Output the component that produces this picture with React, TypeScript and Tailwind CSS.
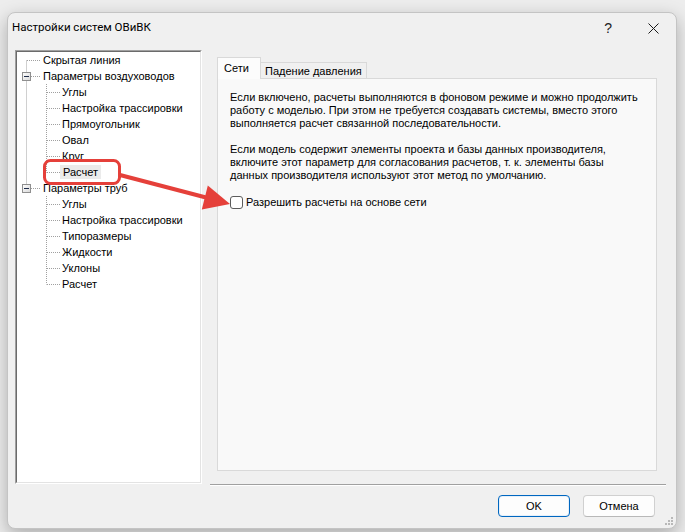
import React from "react";

type Node = { label: string; level: 0 | 1; box?: boolean; selected?: boolean };

const tree: Node[] = [
  { label: "Скрытая линия", level: 0 },
  { label: "Параметры воздуховодов", level: 0, box: true },
  { label: "Углы", level: 1 },
  { label: "Настройка трассировки", level: 1 },
  { label: "Прямоугольник", level: 1 },
  { label: "Овал", level: 1 },
  { label: "Круг", level: 1 },
  { label: "Расчет", level: 1, selected: true },
  { label: "Параметры труб", level: 0, box: true },
  { label: "Углы", level: 1 },
  { label: "Настройка трассировки", level: 1 },
  { label: "Типоразмеры", level: 1 },
  { label: "Жидкости", level: 1 },
  { label: "Уклоны", level: 1 },
  { label: "Расчет", level: 1 },
];

function TreeLines() {
  const cy = (i: number) => 8.5 + 16 * i;
  const dot = { stroke: "#a0a0a0", strokeWidth: 1, strokeDasharray: "1 1" };
  return (
    <svg className="absolute left-0 top-0" width="184" height="260">
      <line x1="9.5" y1={cy(0)} x2="9.5" y2={cy(8)} {...dot} />
      {[0, 1, 8].map((i) => (
        <line key={"h" + i} x1="10" y1={cy(i)} x2="24" y2={cy(i)} {...dot} />
      ))}
      <line x1="29.5" y1="32" x2="29.5" y2={cy(7)} {...dot} />
      <line x1="29.5" y1="144" x2="29.5" y2={cy(14)} {...dot} />
      {[2, 3, 4, 5, 6, 7, 9, 10, 11, 12, 13, 14].map((i) => (
        <line key={"c" + i} x1="30" y1={cy(i)} x2="44" y2={cy(i)} {...dot} />
      ))}
      {[1, 8].map((i) => (
        <g key={"b" + i}>
          <defs>
            <linearGradient id={"g" + i} x1="0" y1="0" x2="1" y2="1">
              <stop offset="0" stopColor="#ffffff" />
              <stop offset="1" stopColor="#d8d8d8" />
            </linearGradient>
          </defs>
          <rect x="5.5" y={cy(i) - 4} width="8" height="8" fill={`url(#g${i})`} stroke="#8f8f8f" />
          <line x1="7" y1={cy(i)} x2="12" y2={cy(i)} stroke="#1f2c4a" strokeWidth="1" />
        </g>
      ))}
    </svg>
  );
}

export default function App() {
  return (
    <div className="relative w-[685px] h-[532px] overflow-hidden bg-[#ededed] pl-[7px] pt-[12px] font-['Liberation_Sans',Arial,sans-serif] text-black">
      <div className="w-[670px] h-[517px] rounded-[8px] border border-[#c4c4c4] bg-[#f0f0f0] shadow-[0_6px_18px_rgba(0,0,0,0.28)] flex flex-col">
        {/* title bar */}
        <div className="h-[32px] flex items-center pl-[4px] pr-[17px] pt-[2px]">
          <div className="font-['Roboto',sans-serif] text-[11.5px] leading-none">Настройки систем ОВиВК</div>
          <div className="ml-auto flex items-center">
            <span className="font-['Liberation_Sans',sans-serif] text-[14px] leading-none text-[#222] mr-[36px]">?</span>
            <svg width="11" height="11" viewBox="0 0 11 11">
              <path d="M0.5 0.5 L10.5 10.5 M10.5 0.5 L0.5 10.5" stroke="#1a1a1a" strokeWidth="1" />
            </svg>
          </div>
        </div>

        {/* body */}
        <div className="flex pl-[7px] pt-[9px]">
          {/* tree */}
          <div className="w-[187px] h-[434px] border-t border-l border-[#a0a0a0] border-r-white border-b-white border-r border-b">
            <div className="w-full h-full border-t border-l border-[#6b6b6b] border-r border-b border-r-[#e3e3e3] border-b-[#e3e3e3] bg-white relative">
              <TreeLines />
              <div className="relative flex flex-col">
                {tree.map((n, i) => (
                  <div
                    key={i}
                    className={n.level === 0 ? "h-4 flex items-center pl-[24px]" : "h-4 flex items-center pl-[43px]"}
                  >
                    <span
                      className={
                        n.selected
                          ? "px-[3px] h-[14px] leading-[14px] text-[11px] bg-[#ebebeb]"
                          : "px-[2px] h-[14px] leading-[14px] text-[11px]"
                      }
                    >
                      {n.label}
                    </span>
                  </div>
                ))}
              </div>
            </div>
          </div>

          {/* right column */}
          <div className="ml-[8px] w-[456px] flex flex-col">
            <div className="pt-[7px] pl-[7px] pr-[9px]">
              <div className="flex items-end h-[21px]">
                <div className="relative z-10 h-[22px] -mb-px w-[44px] border border-b-0 border-[#d9d9d9] bg-[#fcfcfc] pl-[6px] text-[11px] leading-[20px]">
                  Сети
                </div>
                <div className="h-[16px] border border-l-0 border-b-0 border-[#d9d9d9] bg-[#f0f0f0] px-[4px] text-[11px] leading-[16px]">
                  Падение давления
                </div>
              </div>
              <div className="h-[393px] border border-[#d9d9d9] bg-[#f9f9f9] pl-[12px] pt-[12px] text-[11px] leading-[13px]">
                <div className="whitespace-nowrap">Если включено, расчеты выполняются в фоновом режиме и можно продолжить</div>
                <div className="whitespace-nowrap">работу с моделью. При этом не требуется создавать системы, вместо этого</div>
                <div className="whitespace-nowrap">выполняется расчет связанной последовательности.</div>
                <div className="mt-[13px] whitespace-nowrap">Если модель содержит элементы проекта и базы данных производителя,</div>
                <div className="whitespace-nowrap">включите этот параметр для согласования расчетов, т. к. элементы базы</div>
                <div className="whitespace-nowrap">данных производителя используют этот метод по умолчанию.</div>
                <div className="mt-[14px] flex items-center h-[13px]">
                  <div className="w-[13px] h-[13px] rounded-[3px] border border-[#5c5c5c] bg-white" />
                  <span className="ml-[3px] whitespace-nowrap">Разрешить расчеты на основе сети</span>
                </div>
              </div>
            </div>
            <div className="mt-[13px] h-[2px] border-t border-[#a0a0a0] border-b border-b-white" />
          </div>
        </div>

        {/* buttons */}
        <div className="mt-[9px] flex justify-end gap-[13px] pr-[21px]">
          <button className="w-[72px] h-[22px] rounded-[4px] border border-[#0067c0] bg-[#fdfdfd] text-[11px] leading-none shadow-[inset_0_0_0_1px_#e6f0fa]">
            OK
          </button>
          <button className="w-[72px] h-[22px] rounded-[4px] border border-[#d0d0d0] border-b-[#b8b8b8] bg-[#fdfdfd] text-[11px] leading-none">
            Отмена
          </button>
        </div>
        <div className="mt-auto flex justify-end pr-[3px] pb-[3px]">
          <svg width="8" height="8" viewBox="0 0 8 8">
            {[
              [6, 0],
              [6, 3],
              [3, 3],
              [6, 6],
              [3, 6],
              [0, 6],
            ].map(([x, y], k) => (
              <rect key={k} x={x} y={y} width="2" height="2" fill="#b8b8b8" />
            ))}
          </svg>
        </div>
      </div>

      {/* annotation overlay */}
      <svg className="absolute left-0 top-0 pointer-events-none" width="685" height="532">
        <rect x="44.5" y="160.5" width="75" height="23" rx="6" fill="none" stroke="#e5403a" strokeWidth="3" />
        <line x1="120" y1="175" x2="206" y2="197.5" stroke="#e5403a" strokeWidth="4" />
        <polygon points="230,204 201.8,209.5 207.8,185.5" fill="#e5403a" />
      </svg>
    </div>
  );
}
